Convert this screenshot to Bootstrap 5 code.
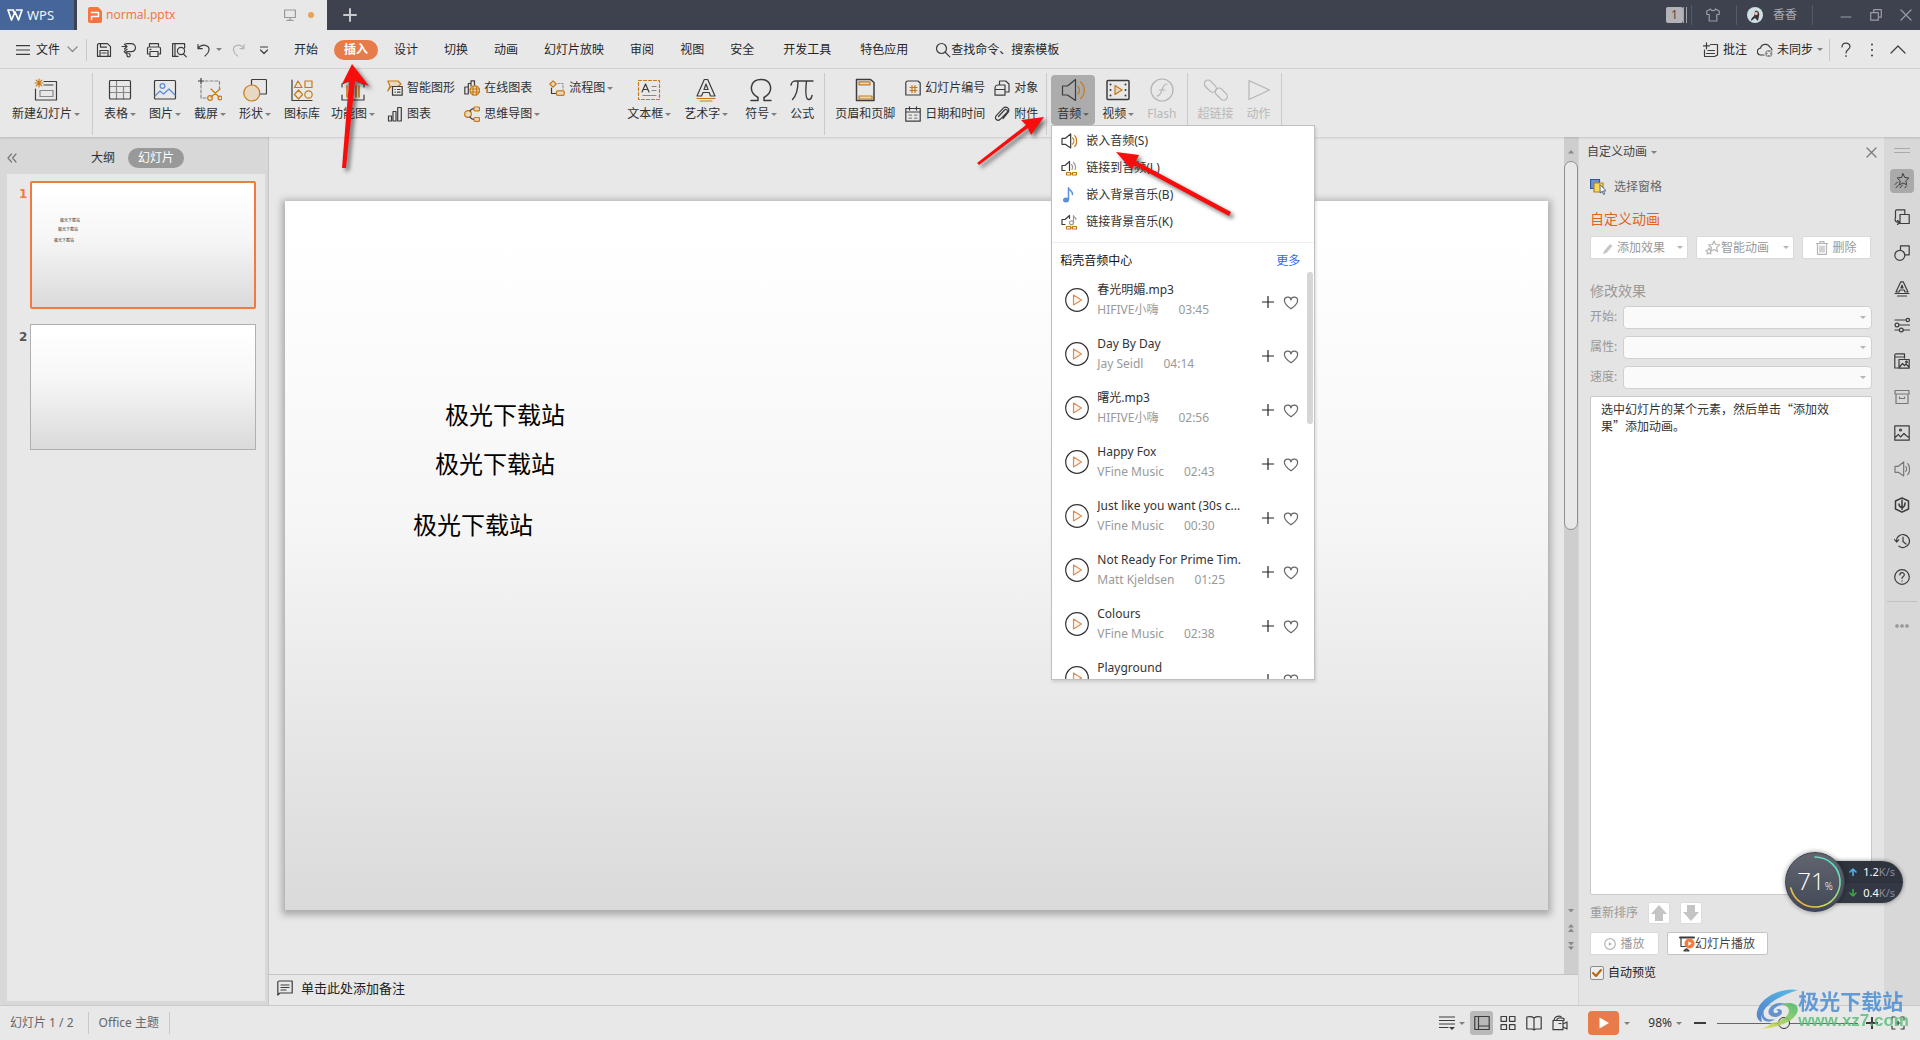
<!DOCTYPE html>
<html lang="zh-CN">
<head>
<meta charset="utf-8">
<meta name="viewport" content="width=device-width, initial-scale=1">
<title>normal.pptx - WPS</title>
<link href="https://cdn.jsdelivr.net/npm/bootstrap@5.3.0/dist/css/bootstrap.min.css" rel="stylesheet">
<style>
:root{--ink:#3c3c3c;--gold:#c67a17;--orange:#f27940;--pane:#e8e8e8;--rail:#d8d8d8;--rule:#cfcfcf}
body{font-family:"Noto Sans","Noto Sans CJK SC",sans-serif;font-size:12px;line-height:20px;color:#303030;background:var(--pane);height:100vh;overflow:hidden;white-space:nowrap}
button,select,input{font:inherit;color:inherit}
button{background:none;border:0;padding:0}
a{color:inherit;text-decoration:none}
svg{display:block;flex:none;fill:none;stroke:var(--ink);stroke-width:1.2;stroke-linejoin:round;stroke-linecap:round}
.g{stroke:var(--gold)}
.gf{stroke:var(--gold);fill:#e6d8c2}
.i16{width:16px;height:16px}
.i24{width:24px;height:24px}
.caret5{border:3px solid transparent;border-top-color:#808080;border-bottom:0;width:6px;flex:none}
/* title bar */
.titlebar{height:30px;background:#3e424f;color:#a9abb1}
.titlebar svg{stroke:#9b9da5}
.wpsTab{width:74px;background:#46669a;color:#f2f4f8;padding-left:7px;gap:4px}
.docTab{width:250px;background:var(--pane);color:var(--orange);margin-left:3px;padding-left:11px;gap:4px}
.docTab svg{stroke:#999}
.tick{width:1px;height:20px;background:#565a66}
.dotMark{width:6px;height:6px;border-radius:50%;background:#e9a25a}
.pageCount{width:17px;height:16px;background:#b3b3b8;color:#5c4a3c;line-height:16px;text-align:center;border-radius:2px}
.pageBars{width:4px;height:16px;border-left:1px solid #a2a4ac;border-right:1px solid #a2a4ac}
.winbtns{gap:14px}
/* menu row */
.menurow{height:39px;border-bottom:1px solid #d2d2d2;color:#262626;padding-top:1px}
.vbar{width:1px;height:22px;background:#c8c8c8}
.tabs{margin-left:9px}
.mtab{padding:0 13px}
.mtab.far{margin-left:3px}
.mtab.on{margin:0 3px;padding:0 10px;border-radius:10px;background:#e77b49;color:#fff;font-weight:600}
/* ribbon */
.ribbon{height:68px;padding:6px 6px 0;position:relative;z-index:5;box-shadow:0 1px 2px #0002}
.bigbtn{padding:3px 6px 0;height:50px;border-radius:4px;margin-right:1px}
.bigbtn .cap{height:20px;margin-top:2px;gap:2px}
.bigbtn.open{background:#acacac}
.bigbtn.open .caret5{border-top-color:#666}
.bigbtn:disabled{color:#b8b8b8}
.bigbtn:disabled svg{stroke:#b4b4b4}
.smbtn{height:26px;gap:4px}
.smbtn .caret5{margin-left:-2px}
.smcol{margin-left:9px}
.smfirst{margin-left:3px}
.rsep{width:1px;height:62px;background:#cbcbcb;margin:-2px 4px 0 3px}
.rsep.wide{margin:-2px 5px 0}
/* audio menu */
.audiomenu{left:0;top:50px;width:264px;height:555px;background:#fff;border:1px solid #c0c0c0;box-shadow:1px 2px 3px #0002;color:#333;z-index:20;padding-top:1px}
.menuitem{height:27px;padding-left:9px;gap:9px}
.centerHead{border-top:1px solid #efefef;height:30px;margin-top:7px;padding:8px 14px 0 8px;color:#111}
.songs{height:407px;overflow:hidden}
.song{height:54px;padding:8px 15px 0 13px}
.song .who{color:#999}
.song .by{gap:20px}
.songtext{width:156px;margin-left:8px;overflow:hidden}
.songbar{right:1px;top:0;width:6px;height:152px;border-radius:3px;background:#d6d6d6}
/* left pane */
.outline{width:269px;background:var(--rail);border-right:1px solid #c6c6c6;padding:0 3px 4px 7px}
.outhead{height:37px}
.pill{background:#999;color:#fff;border-radius:10px;padding:0 10px}
.thumblist{background:var(--pane);padding:7px 9px 0 8px}
.num{width:15px;font:bold 12px/26px "DejaVu Sans","Noto Sans",sans-serif;padding-left:4px;color:#555}
.sheet{background:linear-gradient(#fff 5%,#f6f6f6 45%,#dadada)}
.thumb{width:226px;height:126px;border:1px solid #b0b0b0}
.thumb.sel{height:128px;border:2px solid var(--orange);border-radius:2px}
.thumb span{position:absolute;font-size:4px;line-height:6px;color:#222}
/* canvas */
.stage{padding:64px 16px}
.slide{box-shadow:0 2px 7px 3px #0004}
.slide span{position:absolute;font:24px/36px "Noto Sans CJK SC",sans-serif;color:#000}
.t1{left:160px;top:195px}.t2{left:150px;top:244px}.t3{left:128px;top:305px}
.m1{left:28px;top:35px}.m2{left:26px;top:44px}.m3{left:22px;top:55px}
.vscroll{width:14px;background:#cecece;padding:12px 0 8px}
.vthumb{width:14px;height:369px;border:1px solid #909090;border-radius:7px;background:#e8e8e8;margin-top:6px}
.vscroll svg{stroke:none;fill:#888}
.notes{height:31px;border-top:1px solid #c4c4c4;padding:0 8px 4px;gap:8px;font-size:13px;color:#222}
/* task pane */
.task{width:306px;background:#e4e4e4;border-left:1px solid #d6d6d6;color:#444;padding:5px 12px 0 11px}
.h14{font-size:14px;line-height:22px}
.wbtn{height:23px;background:#fff;border:1px solid #d9d9d9;border-radius:2px;color:#999}
.w98{width:98px}.w68{width:69px}
.dim{color:#999}
.dim .caret5,.wbtn .caret5{border-top-color:#b5b5b5}
.field{height:22px;margin-bottom:8px}
.field label{width:33px}
.field select{height:23px;width:100%;background:#fafafa;border:1px solid #d0d0d0;border-radius:4px;appearance:none}
.field .caret5{position:absolute;right:6px;top:10px}
.tip{background:#fff;border:1px solid #c9c9c9;border-radius:2px;color:#333;font-family:"Noto Sans CJK SC",sans-serif;line-height:17px;padding:3px 38px 0 10px;white-space:normal}
.sq{width:22px;height:22px;background:#fff;border:1px solid #dcdcdc;border-radius:2px}
.sq svg{stroke:none;fill:#c4c4c4}
.chk{appearance:none;width:14px;height:14px;background:#eee;border:1px solid #8c8c8c;border-radius:2px;margin:0}
.chkwrap svg{position:absolute;left:2px;top:3px;stroke:#b8650a;stroke-width:2;pointer-events:none}
/* icon rail */
.iconrail{width:36px;background:var(--rail);padding-top:11px}
.iconrail button{width:24px;height:24px;margin-bottom:12px;border-radius:4px}
.iconrail button.on{background:#aaa}
.grip{width:16px;height:5px;border-top:1px solid #aaa;border-bottom:1px solid #aaa;margin-bottom:16px}
/* status bar */
.statusbar{height:35px;border-top:1px solid #cacaca;color:#666;padding:0 15px 0 10px}
.statusinfo{gap:10px}
.viewon{width:23px;height:24px;background:#b9b9b9;border-radius:3px}
.playbtn{width:31px;height:24px;background:#e77b49;border-radius:4px}
.zoomer{appearance:none;width:141px;height:14px;margin:0 8px 0 11px;background:linear-gradient(#666,#666) center/100% 1px no-repeat}
.zoomer::-webkit-slider-thumb{appearance:none;width:12px;height:12px;border:1px solid #333;border-radius:50%;background:#e8e8e8}
/* floating pieces */
.overlay{position:absolute;pointer-events:none}
.marks{left:0;top:0;z-index:50;stroke:none;fill:#f80d0d;filter:drop-shadow(3px 3px 2px #0008)}
.speed{right:17px;bottom:128px;width:118px;height:60px;z-index:40}
.speedpill{right:0;top:9px;width:88px;height:42px;border-radius:0 21px 21px 0;background:linear-gradient(#2f333e,#2f333e 49%,#1f222a 50%,#343844 52%);color:#fff;padding:0 8px 0 26px;box-shadow:0 0 4px #0007;font-size:11px}
.speedpill .unit{color:#888d99}
.dial{left:0;top:0;width:60px;height:60px;border-radius:50%;background:linear-gradient(#606570,#434857);border:1px solid #3c404c;box-shadow:0 0 5px #0006;color:#fff;font:300 24px/56px "Open Sans",sans-serif;text-align:center}
.dial small{font-size:10px}
.dial svg{position:absolute;left:0;top:0}
.wmark{right:11px;bottom:10px;z-index:45;opacity:.85}
.wmname{font:bold 21px/24px "Noto Sans CJK SC",sans-serif;color:#4c8ed4}
.wmurl{font:bold 17px/18px "Liberation Sans",sans-serif;color:#5cc07a}
</style>
<script src="https://cdn.jsdelivr.net/npm/bootstrap@5.3.0/dist/js/bootstrap.bundle.min.js"></script>
</head>
<body class="d-flex flex-column">
<svg width="0" height="0" class="position-absolute" aria-hidden="true">
  <symbol id="play" viewBox="0 0 24 24"><circle cx="12" cy="12" r="11.3" stroke="#333"/><path d="M8.500 7v10l8-5z" stroke="#d9905c" fill="#fbf3ec"/></symbol>
  <symbol id="plus" viewBox="0 0 12 12"><path d="M6 .5v11M.5 6h11" stroke="#222"/></symbol>
  <symbol id="heart" viewBox="0 0 16 14"><path d="M8 12.800C4 10 1.500 7.800 1.500 5a3.300 3.300 0 0 1 6.500-1.200A3.300 3.300 0 0 1 14.500 5c0 2.800-2.500 5-6.500 7.800z" stroke="#666"/></symbol>
  <symbol id="spk" viewBox="0 0 24 24"><path d="M1.500 8h5L14.500 1.500v21L6.500 17h-5z"/></symbol>
</svg>

<header class="titlebar d-flex align-items-stretch flex-shrink-0">
  <button class="wpsTab d-flex align-items-center"><svg width="16" height="12" viewBox="0 0 16 12" style="stroke:#fff;stroke-width:1.700"><path d="M1 1h5.500M9.500 1H15M1 1l3.500 10L8 3l3.500 8L15 1M6 1l2 4"/></svg><span style="font-size:13px">WPS</span></button>
  <div class="docTab d-flex align-items-center">
    <svg width="14" height="16" viewBox="0 0 14 16"><path d="M2 0h8l4 4v10a2 2 0 0 1-2 2H2a2 2 0 0 1-2-2V2a2 2 0 0 1 2-2z" fill="#f7733f" stroke="none"/><path d="M3.500 5.500h7v4h-7v3" stroke="#fff" stroke-width="1.500"/></svg>
    <span style="font-size:12px">normal.pptx</span>
    <svg class="ms-auto" width="12" height="12" viewBox="0 0 12 12"><path d="M.6 1h10.800v7.500H.6zM6 8.500v2.500M3 11.400h6"/></svg>
    <span class="dotMark ms-2" style="margin-right:13px"></span>
  </div>
  <button class="ms-3" aria-label="新建"><svg width="14" height="14" viewBox="0 0 14 14"><path d="M7 1v12M1 7h12" stroke="#c9cacd" stroke-width="2"/></svg></button>
  <div class="d-flex align-items-center ms-auto pe-2">
    <span class="pageCount">1</span><span class="pageBars"></span>
    <span class="tick ms-1" style="margin-right:14px"></span>
    <svg width="14" height="14" viewBox="0 0 14 14"><path d="M4.500 1 .8 3v3.500h2.400V13h7.600V6.500h2.400V3L9.500 1C9 3.200 5 3.200 4.500 1z"/></svg>
    <span class="tick ms-3" style="margin-right:10px"></span>
    <svg class="i16" viewBox="0 0 16 16"><circle cx="8" cy="8" r="8" fill="#cfe0e4" stroke="none"/><path d="M8 4c3-1 5 2 4 5l-1 5-3-3-4 3c0-3 2-4 3-5z" fill="#3b3236" stroke="none"/><circle cx="9" cy="6.500" r="1.800" fill="#e8b9ae" stroke="none"/></svg>
    <span style="margin:0 15px 0 10px">香香</span>
    <span class="tick" style="margin-right:27px"></span>
    <div class="winbtns d-flex">
    <button aria-label="最小化"><svg width="12" height="12" viewBox="0 0 12 12"><path d="M1 8h10"/></svg></button>
    <button aria-label="还原"><svg class="ms-1" width="12" height="12" viewBox="0 0 12 12"><path d="M.7 3.700h7.600v7.500H.7zM3.700 3.500V.7h7.600v7.500h-3"/></svg></button>
    <button aria-label="关闭"><svg class="ms-1" width="12" height="12" viewBox="0 0 12 12"><path d="m1 1 10 10M11 1 1 11"/></svg></button>
    </div>
  </div>
</header>

<nav class="menurow d-flex align-items-center flex-shrink-0 ps-3">
  <button class="d-flex align-items-center"><svg width="14" height="10" viewBox="0 0 14 10"><path d="M0 .6h14M0 5h14M0 9.400h14"/></svg><span style="margin:0 7px 0 6px">文件</span><svg width="11" height="7" viewBox="0 0 11 7"><path d="m1 1 4.500 4.500L10 1" stroke="#888"/></svg></button>
  <span class="vbar ms-2" style="margin-right:9px"></span>
  <div class="d-flex align-items-center" style="gap:9px">
    <button aria-label="保存"><svg class="i16" viewBox="0 0 16 16"><path d="M2.500 1.600h9l3 3v9.800h-13V2.600zM4 14V8.500h8V14M4.500 1.800v3.400h6M5.800 11h4.400"/></svg></button>
    <button aria-label="输出"><svg class="i16" viewBox="0 0 16 16"><path d="M1 4.500h4.500M3.500 2.200 6 4.500 3.500 7M5 1.700h5.500a4 4 0 0 1 0 8H5.800M6 7.200l-2.800 2.500L6 12M6 9.700v3.500a1.600 1.600 0 1 0 1.800-1.500"/></svg></button>
    <button aria-label="打印"><svg class="i16" viewBox="0 0 16 16"><path d="M3.500 5V1.600h9V5M3.500 12h-2V6.500A1.500 1.500 0 0 1 3 5h10a1.500 1.500 0 0 1 1.500 1.500V12h-2M4 9.500h8v5H4zM4 7.300h1"/></svg></button>
    <button aria-label="打印预览"><svg class="i16" viewBox="0 0 16 16"><path d="M7 14.400H1.600V1.600h12V6M4 1.600v12"/><circle cx="10" cy="9" r="3.600"/><path d="m12.500 12 2.800 2.800"/></svg></button>
    <button class="d-flex align-items-center" aria-label="撤销"><svg class="i16 me-1" viewBox="0 0 16 16"><path d="M2 6.500C6 1 13.500 3 13 8c-.3 2.500-2 4.500-4 6M2 2.500v4.200h4.200"/></svg><span class="caret5"></span></button>
    <button aria-label="恢复"><svg class="i16" viewBox="0 0 16 16"><path d="M13 6.500C9 1 2 3 2.500 8c.3 2.500 2 4.500 4 6M13 2.500v4.200H9" stroke="#b5b5b5"/></svg></button>
    <button aria-label="更多"><svg class="i16" viewBox="0 0 16 16"><path d="M4.500 5h7M4.500 8l3.500 3.500L11.500 8"/></svg></button>
  </div>
  <div class="tabs d-flex">
    <button class="mtab">开始</button><button class="mtab on">插入</button><button class="mtab">设计</button><button class="mtab">切换</button><button class="mtab">动画</button><button class="mtab">幻灯片放映</button><button class="mtab">审阅</button><button class="mtab">视图</button><button class="mtab">安全</button><button class="mtab far">开发工具</button><button class="mtab far">特色应用</button>
  </div>
  <button class="d-flex align-items-center" style="margin-left:14px"><svg class="i16" viewBox="0 0 16 16"><circle cx="6.500" cy="6.500" r="5"/><path d="m10.500 10.500 4.300 4.300"/></svg>查找命令、搜索模板</button>
  <div class="d-flex align-items-center ms-auto" style="padding-right:14px">
    <button class="d-flex align-items-center gap-1"><svg class="i16" viewBox="0 0 16 16"><path d="M7.500 2.500h7v10.500l-3 1.500H1.500V8M3.500.8v6M.5 3.800h6M5 8.500h6.500M3.500 11.500h8"/></svg>批注</button>
    <button class="d-flex align-items-center gap-1" style="margin:0 6px 0 10px"><svg class="i16" viewBox="0 0 16 16"><path d="M7 13H4A3.400 3.400 0 0 1 3.500 6.200 5 5 0 0 1 12.800 5 4 4 0 0 1 15 8"/><circle cx="11.800" cy="11.500" r="3.600" fill="#8d8d8d" stroke="none"/><path d="m10.500 10.200 2.600 2.600m0-2.600-2.600 2.600" stroke="#fff"/></svg>未同步<span class="caret5"></span></button>
    <span class="vbar"></span>
    <button class="ms-2" aria-label="帮助"><svg class="i16" viewBox="0 0 16 16"><path d="M4 5c0-5 8-5 8-.5C12 7.500 8 7.500 8 11M8 13.500v1"/></svg></button>
    <button aria-label="选项" style="margin-left:10px"><svg class="i16" viewBox="0 0 16 16"><path d="M8 2.500v.1M8 8v.1M8 13.400v.1" stroke-width="2"/></svg></button>
    <button aria-label="收起" style="margin-left:10px"><svg class="i16" viewBox="0 0 16 16"><path d="m1 11 7-7 7 7"/></svg></button>
  </div>
</nav>

<section class="ribbon d-flex align-items-start flex-shrink-0">
  <button class="bigbtn d-flex flex-column align-items-center"><svg class="i24" viewBox="0 0 24 24"><path d="M10 3.500h12.500v18.500H1.500V11M10 7h9"/><path d="M6 12.500h13v6H6z" stroke="#888"/><path class="g" d="M5 1v8M1 5h8M2.200 2.200l5.600 5.600M7.800 2.200 2.200 7.800"/></svg><span class="cap d-flex align-items-center">新建幻灯片<i class="caret5"></i></span></button>
  <span class="rsep wide"></span>
  <button class="bigbtn d-flex flex-column align-items-center"><svg class="i24" viewBox="0 0 24 24"><path d="M2 8.500h20M2 14.500h20M8.500 3v18M15.500 8.500V21" stroke="#888"/><rect x="1.500" y="2.500" width="21" height="18.500" rx="1"/></svg><span class="cap d-flex align-items-center">表格<i class="caret5"></i></span></button>
  <button class="bigbtn d-flex flex-column align-items-center"><svg class="i24" viewBox="0 0 24 24"><rect x="1.500" y="2.500" width="21" height="18.500" rx="1"/><path d="m2 18 5-5 3.500 3 5.500-5 6 6" stroke="#5b8cd8"/><circle cx="9.500" cy="8" r="2.400" stroke="#5b8cd8"/></svg><span class="cap d-flex align-items-center">图片<i class="caret5"></i></span></button>
  <button class="bigbtn d-flex flex-column align-items-center"><svg class="i24" viewBox="0 0 24 24"><path d="M7 3h14.500v8M3 7v13h5" stroke="#888" stroke-dasharray="3 2"/><path d="M3 .5v5M.5 3h5"/><path class="g" d="m13 11 8 8M22 11l-9 8"/><circle class="g" cx="12" cy="20" r="2.300"/><circle class="g" cx="22" cy="20" r="1.900"/></svg><span class="cap d-flex align-items-center">截屏<i class="caret5"></i></span></button>
  <button class="bigbtn d-flex flex-column align-items-center"><svg class="i24" viewBox="0 0 24 24"><rect x="8.500" y="1.500" width="15" height="14.500" rx="1"/><circle class="gf" cx="8.800" cy="15" r="8"/></svg><span class="cap d-flex align-items-center">形状<i class="caret5"></i></span></button>
  <button class="bigbtn d-flex flex-column align-items-center"><svg class="i24" viewBox="0 0 24 24"><path d="M2 2v20.500h20"/><path class="g" d="M8 3l4 6.500H4.500zM15 3h7v6.500h-7zM8.500 12l4 4.500-4 4.500-4-4.500z"/><circle class="g" cx="18.500" cy="16.500" r="3.700"/></svg><span class="cap d-flex align-items-center">图标库</span></button>
  <button class="bigbtn d-flex flex-column align-items-center px-1"><svg class="i24" viewBox="0 0 24 24"><path d="M1 9V6l11-5 11 5v3M1 17v5h22v-5"/><path class="g" d="M6 8v11M9 8v11M12 8v8M15 8v11M18 8v11" stroke-width="1.600"/></svg><span class="cap d-flex align-items-center">功能图<i class="caret5"></i></span></button>
  <div class="ps-1 smfirst">
    <button class="smbtn d-flex align-items-center"><svg class="i16" viewBox="0 0 16 16"><path class="gf" d="M.8 1H11l3 3-3 2.500H4L.8 11 3 6z"/><path d="M5.500 6.500h9.700v8.700H5.500z" fill="#e8e8e8"/><path d="M8 9.500h.2M8 12.200h.2M10.500 9.500h2.500M10.500 12.200h2.500"/></svg>智能图形</button>
    <button class="smbtn d-flex align-items-center"><svg class="i16" viewBox="0 0 16 16"><path d="M1.500 10h3v5h-3zM6 5.500h3V15H6zM10.700 1.500h3.600V15h-3.600z"/></svg>图表</button>
  </div>
  <div class="smcol">
    <button class="smbtn d-flex align-items-center"><svg class="i16" viewBox="0 0 16 16"><path d="M.8 7h3.500v7H.8zM4.300 14V3.500H7M7 6V.8h3.500V6"/><circle class="gf" cx="10.800" cy="10.500" r="4.700"/><path class="g" d="M6 9h9.500M6 12h9.500M9 6v9M12.500 6v9"/></svg>在线图表</button>
    <button class="smbtn d-flex align-items-center"><svg class="i16" viewBox="0 0 16 16"><circle class="gf" cx="4" cy="8" r="3.400"/><path d="M6 5c1-2 2-2 4-2.500M6 11c1 2 2 2 4 2.500"/><rect class="gf" x="10" y="1" width="5.500" height="3.800" rx="1"/><rect class="gf" x="10" y="11.500" width="5.500" height="3.800" rx="1"/></svg>思维导图<i class="caret5"></i></button>
  </div>
  <div class="smcol">
    <button class="smbtn d-flex align-items-center"><svg class="i16" viewBox="0 0 16 16"><path class="gf" d="M4 .8 7.200 4 4 7.200.8 4z"/><path d="M2.500 8v5.500H7"/><path d="M9 3.500h5v6" stroke="#999" stroke-dasharray="2 1.500"/><rect class="gf" x="7.500" y="10.800" width="7.700" height="4.500" rx="1"/></svg>流程图<i class="caret5"></i></button>
  </div>
  <button class="bigbtn d-flex flex-column align-items-center ms-2"><svg class="i24" viewBox="0 0 24 24"><rect class="g" x="1.500" y="2.500" width="21" height="19" stroke-dasharray="3 2"/><path d="M5 14 8.500 6 12 14M6.200 11.500h4.600"/><path d="M15 8.500h4M15 12.500h4M6 17.500h13" stroke="#888"/></svg><span class="cap d-flex align-items-center">文本框<i class="caret5"></i></span></button>
  <button class="bigbtn d-flex flex-column align-items-center"><svg class="i24" viewBox="0 0 24 24"><path d="M10.300 1.500h3.400L21 18h-4.500l-1.300-3.500H9L7.500 18H3zM10 11.500h4L12 6z"/><path class="g" d="M3 20.500h18M6 23h12"/></svg><span class="cap d-flex align-items-center">艺术字<i class="caret5"></i></span></button>
  <button class="bigbtn d-flex flex-column align-items-center ms-1"><svg class="i24" viewBox="0 0 24 24"><path d="M2 22.500h7v-3C-2 13 2 1.500 12 1.500S26 13 15 19.500v3h7" stroke-width="1.500"/></svg><span class="cap d-flex align-items-center">符号<i class="caret5"></i></span></button>
  <button class="bigbtn d-flex flex-column align-items-center"><svg class="i24" viewBox="0 0 24 24"><path d="M1 7c1-4 3-4 5-4h17M8 3c0 8-1 14-5.500 18.500M16.500 3c-1 9-1 18 2 18.500 2 .3 3-1.500 3.500-4" stroke-width="1.400"/></svg><span class="cap d-flex align-items-center">公式</span></button>
  <span class="rsep"></span>
  <button class="bigbtn d-flex flex-column align-items-center"><svg class="i24" viewBox="0 0 24 24"><path d="M3.500 1.500h14l3.500 3v18H3.500z" stroke-width="1.500"/><path class="gf" d="M6 3.800h11v3H6zM6 18h13v3H6z"/></svg><span class="cap d-flex align-items-center">页眉和页脚</span></button>
  <div class="smfirst">
    <button class="smbtn d-flex align-items-center"><svg class="i16" viewBox="0 0 16 16"><path d="M.8 2.800A2 2 0 0 1 2.500 1H13l2.200 2v12H.8z"/><path class="g" d="M7 5.500v7M10 5.500v7M5 7.500h7M5 10.500h7"/></svg>幻灯片编号</button>
    <button class="smbtn d-flex align-items-center"><svg class="i16" viewBox="0 0 16 16"><path d="M.8 2.500h14.400v12.700H.8zM.8 6h14.400M4.500.8V4M11.500.8V4"/><path d="M4 9.200h2.500M9.500 9.200H12M4 12.200h2.500M9.500 12.200H12" stroke="#888"/></svg>日期和时间</button>
  </div>
  <div class="smcol">
    <button class="smbtn d-flex align-items-center"><svg class="i16" viewBox="0 0 16 16"><path d="M5.500 5V1h6.200L15 4v8h-4M1 8a3 3 0 0 1 3-3h7v10.200H1zM1 9.500h10"/></svg>对象</button>
    <button class="smbtn d-flex align-items-center"><svg class="i16" viewBox="0 0 16 16"><path d="m4.500 10.500 6-6.500c1.500-1.500 4 .5 2.500 2.300l-6.800 7c-2.700 2.500-6.200-.8-3.900-3.600l7-7.500c2.500-2.500 7-.2 5 4L9 12.500"/></svg>附件</button>
  </div>
  <span class="rsep ms-2"></span>
  <div class="position-relative">
    <button class="bigbtn open d-flex flex-column align-items-center"><svg class="i24" viewBox="0 0 24 24"><use href="#spk"/><path class="g" d="M17 8.500c2 2 2 5.500 0 7.500M19.500 4c5 4 5 12.500 0 16.500"/></svg><span class="cap d-flex align-items-center">音频<i class="caret5"></i></span></button>
    <div class="audiomenu position-absolute">
      <button class="menuitem d-flex align-items-center w-100"><svg class="i16" viewBox="0 0 24 24" style="stroke-width:1.800"><use href="#spk"/><path class="g" d="M17.500 7.500c2.500 2.500 2.500 6.500 0 9M20.500 4c4 4 4 12.500 0 16.500"/></svg>嵌入音频(S)</button>
      <button class="menuitem d-flex align-items-center w-100"><svg class="i16" viewBox="0 0 16 16"><path d="M4 10.500H1v-5h3L8.500 1.500v9"/><path d="M10.500 4.500c1.500 1.500 1.500 3 .5 5M12.500 2.500c2.500 2.500 2.500 4.500 1.500 7" stroke="#999"/><path class="g" d="M5.500 12.500h4v2.500h-4zM11.500 12.500h4v2.500h-4zM9.500 13.800h2"/></svg>链接到音频(L)</button>
      <button class="menuitem d-flex align-items-center w-100"><svg class="i16" viewBox="0 0 16 16"><path d="M7.500 12.500V.8C8 3.500 12 3.800 11.500 7.500" stroke="#5a8ede" stroke-width="1.500"/><ellipse cx="5" cy="13" rx="3" ry="2.500" fill="#5a8ede" stroke="none"/></svg>嵌入背景音乐(B)</button>
      <button class="menuitem d-flex align-items-center w-100"><svg class="i16" viewBox="0 0 16 16"><path d="M4 10.500H1v-5h3L8.500 1.500v3"/><path d="M12.500 9V1.500c.3 2 2.500 2 2.500 4" stroke="#999"/><circle cx="10.500" cy="8.800" r="2" stroke="#999"/><path class="g" d="M5.500 12.500h4v2.500h-4zM11.500 12.500h4v2.500h-4zM9.500 13.800h2"/></svg>链接背景音乐(K)</button>
      <div class="centerHead d-flex justify-content-between"><span>稻壳音频中心</span><a href="#" style="color:#2f6bea">更多</a></div>
      <div class="songs position-relative">
        <div class="songbar position-absolute"></div>
        <div class="song d-flex"><svg class="i24 mt-2" ><use href="#play"/></svg><div class="songtext"><div>春光明媚.mp3</div><div class="who d-flex by"><span>HIFIVE小嗨</span><span>03:45</span></div></div><svg class="ms-auto mt-3" width="12" height="12"><use href="#plus"/></svg><svg class="ms-auto mt-3" width="16" height="14"><use href="#heart"/></svg></div>
        <div class="song d-flex"><svg class="i24 mt-2" ><use href="#play"/></svg><div class="songtext"><div>Day By Day</div><div class="who d-flex by"><span>Jay Seidl</span><span>04:14</span></div></div><svg class="ms-auto mt-3" width="12" height="12"><use href="#plus"/></svg><svg class="ms-auto mt-3" width="16" height="14"><use href="#heart"/></svg></div>
        <div class="song d-flex"><svg class="i24 mt-2" ><use href="#play"/></svg><div class="songtext"><div>曙光.mp3</div><div class="who d-flex by"><span>HIFIVE小嗨</span><span>02:56</span></div></div><svg class="ms-auto mt-3" width="12" height="12"><use href="#plus"/></svg><svg class="ms-auto mt-3" width="16" height="14"><use href="#heart"/></svg></div>
        <div class="song d-flex"><svg class="i24 mt-2" ><use href="#play"/></svg><div class="songtext"><div>Happy Fox</div><div class="who d-flex by"><span>VFine Music</span><span>02:43</span></div></div><svg class="ms-auto mt-3" width="12" height="12"><use href="#plus"/></svg><svg class="ms-auto mt-3" width="16" height="14"><use href="#heart"/></svg></div>
        <div class="song d-flex"><svg class="i24 mt-2" ><use href="#play"/></svg><div class="songtext"><div>Just like you want (30s c...</div><div class="who d-flex by"><span>VFine Music</span><span>00:30</span></div></div><svg class="ms-auto mt-3" width="12" height="12"><use href="#plus"/></svg><svg class="ms-auto mt-3" width="16" height="14"><use href="#heart"/></svg></div>
        <div class="song d-flex"><svg class="i24 mt-2" ><use href="#play"/></svg><div class="songtext"><div>Not Ready For Prime Tim.</div><div class="who d-flex by"><span>Matt Kjeldsen</span><span>01:25</span></div></div><svg class="ms-auto mt-3" width="12" height="12"><use href="#plus"/></svg><svg class="ms-auto mt-3" width="16" height="14"><use href="#heart"/></svg></div>
        <div class="song d-flex"><svg class="i24 mt-2" ><use href="#play"/></svg><div class="songtext"><div>Colours</div><div class="who d-flex by"><span>VFine Music</span><span>02:38</span></div></div><svg class="ms-auto mt-3" width="12" height="12"><use href="#plus"/></svg><svg class="ms-auto mt-3" width="16" height="14"><use href="#heart"/></svg></div>
        <div class="song d-flex"><svg class="i24 mt-2" ><use href="#play"/></svg><div class="songtext"><div>Playground</div></div><svg class="ms-auto mt-3" width="12" height="12"><use href="#plus"/></svg><svg class="ms-auto mt-3" width="16" height="14"><use href="#heart"/></svg></div>
      </div>
    </div>
  </div>
  <button class="bigbtn d-flex flex-column align-items-center"><svg class="i24" viewBox="0 0 24 24"><rect x="1" y="2.500" width="22" height="19" rx="1" stroke-width="1.500"/><path d="M4.500 6.500v.1M4.500 12v.1M4.500 17.500v.1M19.500 6.500v.1M19.500 12v.1M19.500 17.500v.1" stroke-width="2"/><path class="gf" d="M9 7.500v9l7-4.500z"/></svg><span class="cap d-flex align-items-center">视频<i class="caret5"></i></span></button>
  <button class="bigbtn d-flex flex-column align-items-center" disabled><svg class="i24" viewBox="0 0 24 24"><circle cx="12" cy="12" r="11"/><path d="M17 6c-6-.5-4 12-10 12M9.500 12H15"/></svg><span class="cap d-flex align-items-center">Flash</span></button>
  <span class="rsep"></span>
  <button class="bigbtn d-flex flex-column align-items-center" disabled><svg class="i24" viewBox="0 0 24 24"><rect x="-.5" y="4.500" width="14" height="7.500" rx="3.700" transform="rotate(45 6.500 8)"/><rect x="10.500" y="12.500" width="14" height="7.500" rx="3.700" transform="rotate(45 17.500 16)"/></svg><span class="cap d-flex align-items-center">超链接</span></button>
  <button class="bigbtn d-flex flex-column align-items-center" disabled><svg class="i24" viewBox="0 0 24 24"><path d="M2 2.500v19L22.500 12z"/></svg><span class="cap d-flex align-items-center">动作</span></button>
  <span class="rsep"></span>
</section>

<main class="d-flex flex-grow-1" style="min-height:0">
  <aside class="outline d-flex flex-column flex-shrink-0">
    <div class="outhead d-flex align-items-center flex-shrink-0 pt-1">
      <button aria-label="折叠"><svg width="10" height="10" viewBox="0 0 10 10"><path d="M4.500 1 1 5l3.500 4M9 1 5.500 5 9 9" stroke="#777"/></svg></button>
      <button style="margin:0 13px 0 74px">大纲</button><button class="pill">幻灯片</button>
    </div>
    <div class="thumblist flex-grow-1">
      <div class="d-flex"><span class="num" style="color:#f27940">1</span><div class="thumb sel sheet position-relative"><span class="m1">极光下载站</span><span class="m2">极光下载站</span><span class="m3">极光下载站</span></div></div>
      <div class="d-flex" style="margin-top:15px"><span class="num">2</span><div class="thumb sheet"></div></div>
    </div>
  </aside>
  <div class="d-flex flex-column flex-grow-1" style="min-width:0">
    <div class="d-flex flex-grow-1">
      <div class="stage d-flex flex-grow-1"><div class="slide sheet flex-grow-1 position-relative"><span class="t1">极光下载站</span><span class="t2">极光下载站</span><span class="t3">极光下载站</span></div></div>
      <div class="vscroll d-flex flex-column align-items-center">
        <svg width="6" height="6" viewBox="0 0 6 6"><path d="M0 4.500h6L3 1z"/></svg>
        <div class="vthumb"></div>
        <svg class="mt-auto" width="6" height="6" viewBox="0 0 6 6"><path d="M0 1h6L3 4.500z"/></svg>
        <svg style="margin:10px 0" width="8" height="8" viewBox="0 0 8 8"><path d="M1 3.500h6L4 0zM1 8h6L4 4.500z"/></svg>
        <svg class="mb-3" width="8" height="8" viewBox="0 0 8 8"><path d="M1 0h6L4 3.500zM1 4.500h6L4 8z"/></svg>
      </div>
    </div>
    <div class="notes d-flex align-items-center flex-shrink-0"><svg class="i16" viewBox="0 0 16 16"><path d="M.8 15V2.500A1.500 1.500 0 0 1 2.300 1h12.900v12H3zM4 5h8M4 7.500h8M4 10h5"/></svg>单击此处添加备注</div>
  </div>
  <aside class="task d-flex flex-column flex-shrink-0">
    <div class="d-flex align-items-center" style="margin-left:-3px"><button class="d-flex align-items-center gap-1">自定义动画<i class="caret5"></i></button><button class="ms-auto" aria-label="关闭" style="margin-right:-5px"><svg width="11" height="11" viewBox="0 0 11 11"><path d="m1 1 9 9M10 1l-9 9" stroke="#777"/></svg></button></div>
    <button class="d-flex align-items-center gap-2 mt-3" style="height:18px;color:#666"><svg class="i16" viewBox="0 0 16 16"><path d="M.5.500h9v9h-9z" fill="#6d93cf" stroke="#31569c"/><path d="M4 4h9v9H4z" fill="#f8d75c" stroke="#b38414"/><path d="m10 6 .2 8 2-1.800 1.300 3.300 1.300-.6-1.300-3.100h2.300z" fill="#fff" stroke="#34466c" stroke-width=".8"/></svg>选择窗格</button>
    <div class="h14" style="color:#e0651a;margin-top:12px">自定义动画</div>
    <div class="d-flex gap-2" style="margin-top:6px">
      <button class="wbtn w98 d-flex align-items-center" disabled><svg class="ms-2 me-1" width="16" height="14" viewBox="0 0 16 14"><path d="m5 10 6-7 2.500 2-6 7L4 13z" fill="#c6c6c6" stroke="none"/></svg><span style="margin-left:-2px">添加效果</span><i class="caret5 ms-auto me-1"></i></button>
      <button class="wbtn w98 d-flex align-items-center" disabled><svg class="i16 ms-2" viewBox="0 0 16 16"><path d="m9 1 1.600 3.500 4 .4-3 2.700 1 4L9 9.500l-3.500 2 1-4-3-2.600 4-.4zM4 8l1 2 2 .3-1.500 1.500.4 2.200L4 13l-2 1 .4-2.200L1 10.300 3 10z" stroke="#b5b5b5"/></svg>智能动画<i class="caret5 ms-auto me-1"></i></button>
      <button class="wbtn w68 d-flex align-items-center justify-content-center gap-1" disabled><svg width="12" height="14" viewBox="0 0 12 14"><path d="M.5 2.500h11M4 2V.7h4V2M1.500 3v10.300h9V3M4 5v6M6 5v6M8 5v6" stroke="#b5b5b5"/></svg>删除</button>
    </div>
    <div class="h14 dim" style="margin-top:21px;margin-bottom:4px">修改效果</div>
    <div class="field dim d-flex align-items-center"><label for="f1">开始:</label><div class="position-relative flex-grow-1"><select id="f1" disabled></select><i class="caret5"></i></div></div>
    <div class="field dim d-flex align-items-center"><label for="f2">属性:</label><div class="position-relative flex-grow-1"><select id="f2" disabled></select><i class="caret5"></i></div></div>
    <div class="field dim d-flex align-items-center"><label for="f3">速度:</label><div class="position-relative flex-grow-1"><select id="f3" disabled></select><i class="caret5"></i></div></div>
    <div class="tip flex-grow-1">选中幻灯片的某个元素，然后单击“添加效果”添加动画。</div>
    <div class="d-flex align-items-center dim" style="margin-top:7px;gap:10px">重新排序<button class="sq" aria-label="上移" disabled><svg width="20" height="20" viewBox="0 0 20 20"><path d="m10 2 8 9h-4v7H6v-7H2z"/></svg></button><button class="sq" aria-label="下移" disabled><svg width="20" height="20" viewBox="0 0 20 20"><path d="m10 18 8-9h-4V2H6v7H2z"/></svg></button></div>
    <div class="d-flex gap-2" style="margin-top:8px">
      <button class="wbtn w68 d-flex align-items-center justify-content-center gap-1" disabled><svg width="12" height="12" viewBox="0 0 12 12"><circle cx="6" cy="6" r="5.300" stroke="#b5b5b5"/><path d="M4.800 4v4L8 6z" fill="#b5b5b5" stroke="none"/></svg>播放</button>
      <button class="wbtn d-flex align-items-center" style="padding:0 12px 0 11px;color:#444;border-color:#c4c4c4"><svg class="i16" viewBox="0 0 16 16"><path d="M1 1.500h14" stroke-width="2"/><path d="M2 2v8.500h5M5 14.800h5l-2.500-2z"/><circle cx="10.500" cy="7.500" r="5" fill="#f47b3e" stroke="none"/><path d="M9.300 5.200v4.600l3.500-2.300z" fill="#fff" stroke="none"/></svg>幻灯片播放</button>
    </div>
    <div class="chkwrap d-flex align-items-center position-relative gap-1" style="margin:8px 0 22px"><input class="chk" type="checkbox" id="auto" checked><label for="auto" style="color:#222">自动预览</label><svg width="10" height="14" viewBox="0 0 10 14"><path d="m1 7 3 3 5-6"/></svg></div>
  </aside>
  <aside class="iconrail d-flex flex-column align-items-center flex-shrink-0">
    <span class="grip"></span>
    <button class="on d-flex justify-content-center align-items-center" aria-label="动画"><svg class="i16" viewBox="0 0 16 16"><path d="m9 .8 1.800 3.700 4 .5-3 2.800.8 4L9 9.900l-3.600 2 .8-4-3-2.900 4-.5zM3.500 9 1 11.500M4.500 12 2 14.800M8.500 12 6 14.800M12.500 13 11 14.800" stroke-width="1"/></svg></button>
    <button class="d-flex justify-content-center align-items-center" aria-label="切换"><svg class="i16" viewBox="0 0 16 16"><path d="M1.500 9V2A1.300 1.300 0 0 1 2.800.8h8V5M6 5.500h9.200v9H6zM1 9.500c0 3 2 4 4 4M3.500 11.500l2.200 2-2.200 2"/></svg></button>
    <button class="d-flex justify-content-center align-items-center" aria-label="形状"><svg class="i16" viewBox="0 0 16 16"><path d="M6.500 4.500V.8h8.700v9h-4"/><circle cx="5.800" cy="10.300" r="5"/></svg></button>
    <button class="d-flex justify-content-center align-items-center" aria-label="艺术字"><svg class="i16" viewBox="0 0 16 16"><path d="M6.800.8h2.400L14 11h-3l-.8-2H5.800L5 11H2zM7 7h2L8 4.200zM1 12.500h14M3.500 15h9"/></svg></button>
    <button class="d-flex justify-content-center align-items-center" aria-label="设置"><svg class="i16" viewBox="0 0 16 16"><path d="M1 3h11M5 8h10.500M1 13h4.500M9 13h6.500"/><circle cx="13.800" cy="3" r="1.700"/><circle cx="3" cy="8" r="1.900"/><circle cx="7.300" cy="13" r="1.900"/></svg></button>
    <button class="d-flex justify-content-center align-items-center" aria-label="模板"><svg class="i16" viewBox="0 0 16 16"><path d="M4 15H.8V2A1.200 1.200 0 0 1 2 .8h8.500V5M.8 4h9.500M5 6.500h10.200v8.700H5zM5.500 14l3-3.500 2 2 1.500-1.500 3 3"/><circle cx="12.500" cy="9" r=".8"/></svg></button>
    <button class="d-flex justify-content-center align-items-center" aria-label="素材"><svg class="i16" viewBox="0 0 16 16"><path d="M1 1.500h14V5H1zM2 5v9.500h12V5M5.500 8v1.500h5V8" stroke="#777"/></svg></button>
    <button class="d-flex justify-content-center align-items-center" aria-label="图片"><svg class="i16" viewBox="0 0 16 16"><path d="M.8.800h14.400v14.400H.8zM1 12.500l3.500-3 2 2.500 3.500-3.500 2 2 3 2"/><circle cx="6.500" cy="5" r="1"/></svg></button>
    <button class="d-flex justify-content-center align-items-center" aria-label="音频"><svg class="i16" viewBox="0 0 24 24" style="stroke:#777;stroke-width:1.800"><use href="#spk"/><path d="M17.500 8.500c2 2 2 5 0 7M20.500 4c4 4 4 12.500 0 16.500"/></svg></button>
    <button class="d-flex justify-content-center align-items-center" aria-label="资源"><svg class="i16" viewBox="0 0 16 16"><path d="M8 .800 14.500 4v8L8 15.200 1.500 12V4z" stroke-width="1.500"/><path d="M8 3v9.500M8 10.500C5.500 10 5 8.500 5 7M8 11c2.500-1 3-3 3-5" stroke-width="1.500"/></svg></button>
    <button class="d-flex justify-content-center align-items-center" aria-label="历史"><svg class="i16" viewBox="0 0 16 16"><path d="M2.500 9A6.500 6.500 0 1 1 5 13.200M.5 6.500 2.500 9l2.200-2M9 4v4.500l3 2.500"/></svg></button>
    <button class="d-flex justify-content-center align-items-center" aria-label="帮助"><svg class="i16" viewBox="0 0 16 16"><circle cx="8" cy="8" r="7.300"/><path d="M5.800 6c0-3.200 4.500-3 4.500-.3C10.300 7.500 8 7.500 8 9.500M8 11.800v.3"/></svg></button>
    <span style="width:30px;height:1px;background:#c2c2c2"></span>
    <button class="d-flex justify-content-center align-items-center mt-2 pt-2" aria-label="更多"><svg width="14" height="4" viewBox="0 0 14 4" style="stroke:#888"><circle cx="2" cy="2" r="1.200"/><circle cx="7" cy="2" r="1.200"/><circle cx="12" cy="2" r="1.200"/></svg></button>
  </aside>
</main>

<footer class="statusbar d-flex align-items-center flex-shrink-0">
  <div class="statusinfo d-flex align-items-center"><span class="pe-1">幻灯片 1 / 2</span><span class="vbar"></span><span>Office 主题</span><span class="vbar"></span></div>
  <div class="d-flex align-items-center ms-auto">
    <button class="d-flex align-items-center gap-1" aria-label="备注"><svg class="i16" viewBox="0 0 16 16"><path d="M0 2h16M0 5.500h16M0 9h16M0 12.500h9"/><path d="M10 12h6l-3 3z" fill="#3c3c3c" stroke="none"/></svg><i class="caret5"></i></button>
    <button class="viewon d-flex align-items-center justify-content-center" style="margin:0 7px 0 5px" aria-label="普通视图"><svg class="i16" viewBox="0 0 16 16"><path d="M.8 1.500h14.400v13H.8zM4.500 1.500v13M4.500 11h10.700"/></svg></button>
    <button aria-label="浏览"><svg class="i16" viewBox="0 0 16 16"><path d="M1 1.500h5.500v4.800H1zM9.500 1.500H15v4.800H9.500zM1 9.700h5.500v4.800H1zM9.500 9.700H15v4.800H9.500z"/></svg></button>
    <button style="margin:0 10px" aria-label="阅读"><svg class="i16" viewBox="0 0 16 16"><path d="M8 3C6 1.500 3 1.500.8 2v12h5.500L8 15l1.700-1h5.500V2C13 1.500 10 1.500 8 3zM8 3v12"/></svg></button>
    <button aria-label="录制"><svg class="i16" viewBox="0 0 16 16"><path d="M1 5.500h10v9.200H1zM11 9l4-2v7l-4-2M2 5.500C2 2 6 .500 9 1.500M4.500 5.500C5 3 8 2 12 3.500v2M7 8.500h2"/></svg></button>
    <button class="playbtn d-flex align-items-center justify-content-center" style="margin:0 5px 0 20px" aria-label="播放"><svg width="12" height="14" viewBox="0 0 12 14"><path d="M1.500 1.500v11L11 7z" fill="#fff" stroke="none"/></svg></button>
    <i class="caret5"></i>
    <button class="d-flex align-items-center gap-1" style="margin:0 12px 0 18px;color:#333">98%<i class="caret5"></i></button>
    <button aria-label="缩小"><svg width="12" height="12" viewBox="0 0 12 12"><path d="M.5 6h11" stroke-width="2"/></svg></button>
    <input class="zoomer" type="range" min="0" max="100" value="47" aria-label="缩放">
    <button aria-label="放大"><svg width="12" height="12" viewBox="0 0 12 12"><path d="M6 .5v11M.5 6h11" stroke-width="2"/></svg></button>
    <button style="margin-left:13px" aria-label="适应窗口"><svg width="14" height="14" viewBox="0 0 14 14"><path d="M1 4V1h3M10 1h3v3M13 10v3h-3M4 13H1v-3M5 7h4M7 5v4"/></svg></button>
  </div>
</footer>

<div class="overlay speed">
  <div class="overlay speedpill d-flex flex-column justify-content-around">
    <div class="d-flex align-items-center lh-1"><svg class="ms-2" width="8" height="8" viewBox="0 0 8 8"><path d="M4 7.500V1M1 4l3-3 3 3" stroke="#4db4f0" stroke-width="1.600"/></svg><b class="ms-auto fw-normal">1.2</b><span class="unit">K/s</span></div>
    <div class="d-flex align-items-center lh-1"><svg class="ms-2" width="8" height="8" viewBox="0 0 8 8"><path d="M4 .5V7M1 4l3 3 3-3" stroke="#3aa845" stroke-width="1.600"/></svg><b class="ms-auto fw-normal">0.4</b><span class="unit">K/s</span></div>
  </div>
  <div class="overlay dial">71<small>%</small><svg width="58" height="58" viewBox="0 0 58 58"><defs><linearGradient id="ring" x1="1" y1="0" x2=".3" y2="1"><stop offset="0" stop-color="#3fe0e0"/><stop offset=".5" stop-color="#8fe08a"/><stop offset=".85" stop-color="#d8d84a"/><stop offset="1" stop-color="#f0b03c"/></linearGradient></defs><path d="M29 4a25 25 0 1 1-24.200 31" stroke="url(#ring)" stroke-width="1.600"/></svg></div>
</div>

<div class="overlay wmark d-flex">
  <svg width="42" height="42" viewBox="0 0 42 42"><defs><linearGradient id="sw" x1="0" y1="1" x2="1" y2="0"><stop offset="0" stop-color="#3c6fc4"/><stop offset="1" stop-color="#3cb6ea"/></linearGradient><linearGradient id="sg" x1="1" y1="0" x2="0" y2="1"><stop offset="0" stop-color="#3db86a"/><stop offset="1" stop-color="#e6e04a"/></linearGradient></defs><g stroke="none"><path d="M42 2C26-1 4 9 1 24c-1 5 1 9 5 10-3-9 5-22 36-32z" fill="url(#sw)"/><path d="M26 16c12-3 18 2 15 9-4 9-20 15-36 16 6-2 9-4 10-6 14-1 26-14 11-19z" fill="url(#sg)"/><path d="M30 16c-10-4-20 4-17 10 3 5 13 3 13-2 0-3-4-4-6-2 3 0 3 3 0 3-5 0-3-8 10-9zM8 22c-2 8 4 11 11 9-5 5-15 3-13-6z" fill="#4d86cc"/></g></svg>
  <div><div class="wmname">极光下载站</div><div class="wmurl">www.xz7.com</div></div>
</div>

<svg class="overlay marks" width="1240" height="230" viewBox="0 0 1240 230" aria-hidden="true">
  <path d="m352 64 17 22-14-5-9 87h-4l7-87-7 3z"/>
  <path d="m1044 117-13 18-3-7-49 37-2-2 49-38-5-5z"/>
  <path d="m1116 152 23 3-3 6 95 51-2 4-95-51-2 5z"/>
</svg>
</body>
</html>
